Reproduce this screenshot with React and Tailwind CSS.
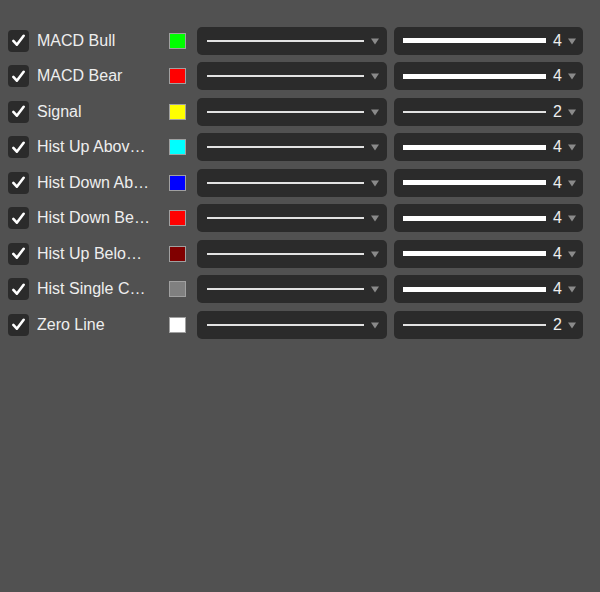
import { useState } from 'react';

const rows = [
  { label: 'MACD Bull', color: '#00ff00', width: 4 },
  { label: 'MACD Bear', color: '#ff0000', width: 4 },
  { label: 'Signal', color: '#ffff00', width: 2 },
  { label: 'Hist Up Above Zero', color: '#00ffff', width: 4 },
  { label: 'Hist Down Above Zero', color: '#0000ff', width: 4 },
  { label: 'Hist Down Below Zero', color: '#ff0000', width: 4 },
  { label: 'Hist Up Below Zero', color: '#800000', width: 4 },
  { label: 'Hist Single Color', color: '#808080', width: 4 },
  { label: 'Zero Line', color: '#ffffff', width: 2 },
];

function Arrow() {
  return (
    <svg width="8" height="8" viewBox="0 0 8 8" className="shrink-0">
      <path d="M0 1.5 L8 1.5 L4 7.5 Z" fill="#8a8a8a" />
    </svg>
  );
}

function Check({ checked, onClick }) {
  return (
    <button
      onClick={onClick}
      className="flex h-[22px] w-[21px] shrink-0 items-center justify-center rounded-[4px] bg-[#2b2b2b]"
    >
      {checked && (
        <svg width="15" height="15" viewBox="0 0 16 16">
          <path
            d="M2.5 8.5 L6.2 12.5 L13.5 3"
            fill="none"
            stroke="#fff"
            strokeWidth="2.8"
            strokeLinecap="round"
            strokeLinejoin="round"
          />
        </svg>
      )}
    </button>
  );
}

export default function App() {
  const [checked, setChecked] = useState(rows.map(() => true));

  const toggle = (i) => {
    const next = [...checked];
    next[i] = !next[i];
    setChecked(next);
  };

  return (
    <div className="h-[592px] w-[600px] bg-[#515151] pt-[23px] font-['Liberation_Sans',Arial,sans-serif]">
      {rows.map((row, i) => (
        <div key={row.label} className="flex h-[35.5px] items-center pl-[8px]">
          <Check checked={checked[i]} onClick={() => toggle(i)} />
          <div className="ml-[8px] w-[113px] shrink-0 truncate text-[16px] text-[#eeeeee]">
            {row.label}
          </div>
          <div
            className="ml-[19px] h-[16px] w-[17px] shrink-0 border border-[#a0a0a0]"
            style={{ backgroundColor: row.color }}
          />
          <div className="ml-[11px] flex h-[28px] w-[190px] shrink-0 items-center rounded-[5px] bg-[#2b2b2b] pl-[10px] pr-[8px]">
            <div className="h-[2px] flex-1 bg-[#e2e2e2]" />
            <div className="ml-[7px]">
              <Arrow />
            </div>
          </div>
          <div className="ml-[7px] flex h-[28px] w-[189px] shrink-0 items-center rounded-[5px] bg-[#2b2b2b] pl-[9px] pr-[7px]">
            <div
              className={
                row.width === 4
                  ? 'h-[5px] flex-1 bg-white'
                  : 'h-[2px] flex-1 bg-[#e2e2e2]'
              }
            />
            <span className="ml-[7px] text-[16px] leading-none text-[#eeeeee]">
              {row.width}
            </span>
            <div className="ml-[6px]">
              <Arrow />
            </div>
          </div>
        </div>
      ))}
    </div>
  );
}
